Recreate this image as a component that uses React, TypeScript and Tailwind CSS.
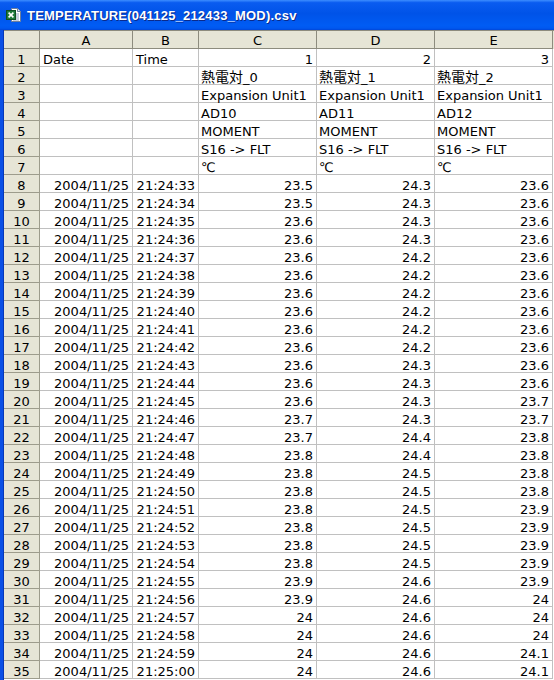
import React from 'react';

type Row = {
  n: number;
  a?: string;
  b?: string;
  c?: React.ReactNode;
  d?: React.ReactNode;
  e?: React.ReactNode;
  // text rows are left aligned in C..E, numbers right aligned
  text?: boolean;
};

const values: [string, string, string][] = [
  ['23.5', '24.3', '23.6'],
  ['23.5', '24.3', '23.6'],
  ['23.6', '24.3', '23.6'],
  ['23.6', '24.3', '23.6'],
  ['23.6', '24.2', '23.6'],
  ['23.6', '24.2', '23.6'],
  ['23.6', '24.2', '23.6'],
  ['23.6', '24.2', '23.6'],
  ['23.6', '24.2', '23.6'],
  ['23.6', '24.2', '23.6'],
  ['23.6', '24.3', '23.6'],
  ['23.6', '24.3', '23.6'],
  ['23.6', '24.3', '23.7'],
  ['23.7', '24.3', '23.7'],
  ['23.7', '24.4', '23.8'],
  ['23.8', '24.4', '23.8'],
  ['23.8', '24.5', '23.8'],
  ['23.8', '24.5', '23.8'],
  ['23.8', '24.5', '23.9'],
  ['23.8', '24.5', '23.9'],
  ['23.8', '24.5', '23.9'],
  ['23.8', '24.5', '23.9'],
  ['23.9', '24.6', '23.9'],
  ['23.9', '24.6', '24'],
  ['24', '24.6', '24'],
  ['24', '24.6', '24'],
  ['24', '24.6', '24.1'],
  ['24', '24.6', '24.1'],
];

function Sensor({ i }: { i: number }) {
  return (
    <>
      <span className="text-[14px]">熱電対</span>_{i}
    </>
  );
}

const headRows: Row[] = [
  { n: 1, a: 'Date', b: 'Time', c: '1', d: '2', e: '3' },
  { n: 2, c: <Sensor i={0} />, d: <Sensor i={1} />, e: <Sensor i={2} />, text: true },
  { n: 3, c: 'Expansion Unit1', d: 'Expansion Unit1', e: 'Expansion Unit1', text: true },
  { n: 4, c: 'AD10', d: 'AD11', e: 'AD12', text: true },
  { n: 5, c: 'MOMENT', d: 'MOMENT', e: 'MOMENT', text: true },
  { n: 6, c: 'S16 -> FLT', d: 'S16 -> FLT', e: 'S16 -> FLT', text: true },
  { n: 7, c: '℃', d: '℃', e: '℃', text: true },
];

const dataRows: Row[] = values.map((v, i) => {
  const sec = 33 + i;
  const time = sec >= 60 ? `21:25:${String(sec - 60).padStart(2, '0')}` : `21:24:${sec}`;
  return { n: 8 + i, a: '2004/11/25', b: time, c: v[0], d: v[1], e: v[2] };
});

const rows = [...headRows, ...dataRows];

const cell = 'h-[18px] border-r border-b border-[#c0c0c0] px-[3px] pt-[4px] leading-[13px] whitespace-nowrap';

function ExcelIcon() {
  return (
    <svg width="16" height="16" viewBox="0 0 16 16">
      <path d="M5.5 1.5h6l3 3v10h-9z" fill="#fff" stroke="#6d7f9c" />
      <path d="M11.5 1.5v3h3" fill="#dfe4ee" stroke="#6d7f9c" />
      <path d="M10 7h3M10 9h3M10 11h3M7 13h6" stroke="#8fa0bb" />
      <rect x="0.5" y="3.5" width="9" height="9" fill="#1e7b3c" stroke="#0e4f22" />
      <path d="M2.6 5.6l4.8 4.8M7.4 5.6l-4.8 4.8" stroke="#fff" strokeWidth="1.6" />
    </svg>
  );
}

export default function App() {
  return (
    <div className="w-[554px] h-[680px] overflow-hidden bg-white flex flex-col">
      <div className="h-[30px] shrink-0 flex items-center pl-[6px] bg-[linear-gradient(180deg,#3d8eff_0%,#0a5cf0_9%,#0053e8_45%,#005cf4_85%,#0058f0_94%,#0046d8_100%)]">
        <ExcelIcon />
        <span className="ml-[5px] pt-[1px] text-[13px] tracking-[0.2px] font-bold text-white [font-family:'Liberation_Sans',Arial,sans-serif] [text-shadow:1px_1px_0_#0b2a8a]">
          TEMPERATURE(041125_212433_MOD).csv
        </span>
      </div>
      <div className="flex flex-1 min-h-0">
        <div className="w-[4px] shrink-0 bg-[#0a50e6] border-r border-[#0638b8]" />
        <div className="flex-1 text-[13px] text-black [font-family:'DejaVu_Sans','Noto_Sans_CJK_JP',sans-serif]">
          <div className="grid grid-cols-[36px_93px_66px_118px_118px_118px] border-t border-[#8d8c7e] bg-[#e6e5d6] h-[19px]">
            <div className="border-r border-b border-[#8d8c7e]" />
            {['A', 'B', 'C', 'D', 'E'].map((l) => (
              <div key={l} className="border-r border-b border-[#8d8c7e] text-center pt-[3px] leading-[13px]">
                {l}
              </div>
            ))}
          </div>
          {rows.map((r) => (
            <div key={r.n} className="grid grid-cols-[36px_93px_66px_118px_118px_118px]">
              <div className="h-[18px] bg-[#e6e5d6] border-r border-b border-[#9d9c8c] text-center pt-[4px] leading-[13px]">
                {r.n}
              </div>
              <div className={`${cell} ${r.n === 1 ? 'text-left' : 'text-right'}`}>{r.a}</div>
              <div className={`${cell} ${r.n === 1 ? 'text-left' : 'text-right'}`}>{r.b}</div>
              <div className={`${cell} ${r.text ? 'text-left pl-[2px]' : 'text-right'}`}>{r.c}</div>
              <div className={`${cell} ${r.text ? 'text-left pl-[2px]' : 'text-right'}`}>{r.d}</div>
              <div className={`${cell} ${r.text ? 'text-left pl-[2px]' : 'text-right'}`}>{r.e}</div>
            </div>
          ))}
        </div>
      </div>
    </div>
  );
}
